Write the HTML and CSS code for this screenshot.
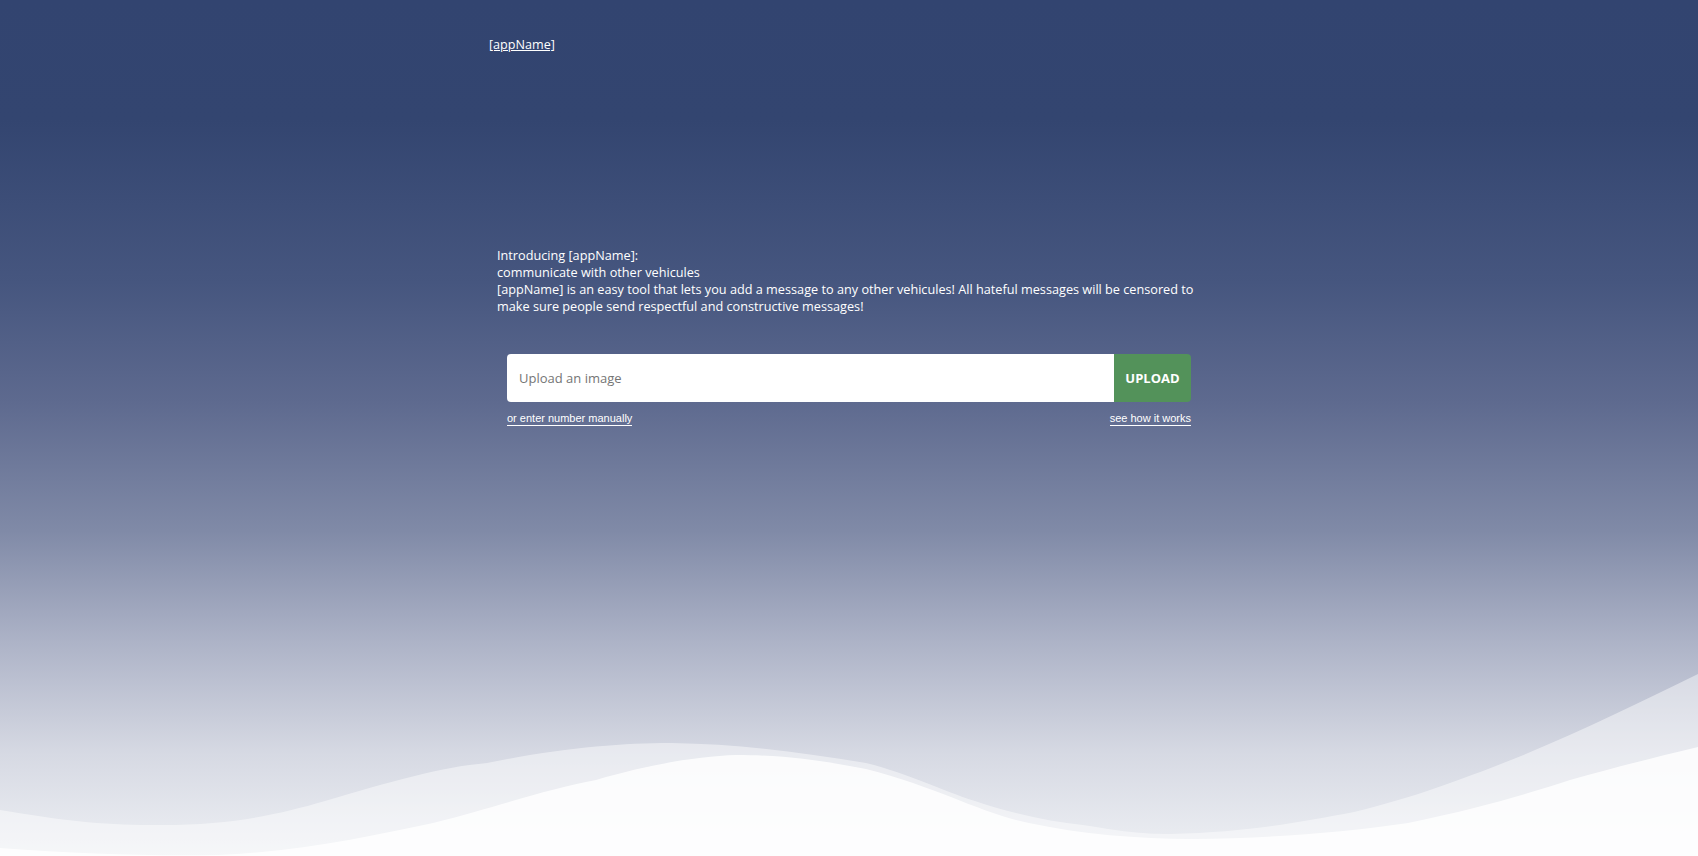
FILE: index.html
```html
<!DOCTYPE html>
<html lang="en">
<head>
<meta charset="utf-8">
<title>[appName]</title>
<link rel="stylesheet" href="styles.css">
</head>
<body>
<div class="page">
  <div class="container">
    <header class="header">
      <a class="brand" href="#">[appName]</a>
    </header>
    <section class="intro">
      <p class="intro-line">Introducing [appName]:</p>
      <p class="intro-line">communicate with other vehicules</p>
      <p class="intro-line">[appName] is an easy tool that lets you add a message to any other vehicules! All hateful messages will be censored to make sure people send respectful and constructive messages!</p>
    </section>
    <form class="upload">
      <div class="upload-row">
        <input class="upload-input" type="text" placeholder="Upload an image">
        <button class="upload-btn" type="button">UPLOAD</button>
      </div>
      <div class="upload-links">
        <a class="small-link" href="#">or enter number manually</a>
        <a class="small-link" href="#">see how it works</a>
      </div>
    </form>
  </div>
  <svg class="waves" viewBox="0 0 1698 200" preserveAspectRatio="none" aria-hidden="true">
    <path fill="rgba(255,255,255,0.45)" d="M0 154 C60 164 100 169 152 169 C230 170 280 158 325 145 C390 126 440 111 487 107 C560 92 620 87 671 87 C740 88 800 96 866 107 C910 118 940 134 975 145 C1010 157 1050 166 1083 169 C1120 175 1140 178 1170 178 C1250 176 1300 166 1354 156 C1420 140 1470 120 1516 102 C1580 76 1640 46 1698 18 L1698 200 L0 200 Z"/>
    <path fill="rgba(255,255,255,0.8)" d="M0 192 C80 198 150 200 217 199 C300 196 370 180 433 167 C500 150 550 132 596 124 C650 108 700 100 736 99 C790 99 830 106 866 113 C940 132 980 157 1029 167 C1080 178 1140 183 1191 183 C1270 182 1340 177 1408 167 C1480 152 1530 137 1570 124 C1620 110 1660 100 1698 91 L1698 200 L0 200 Z"/>
  </svg>
</div>
</body>
</html>
```

FILE: styles.css
```css
html, body {
  margin: 0;
  padding: 0;
}

body {
  font-family: "Open Sans", "Noto Sans", Arial, sans-serif;
  color: #ffffff;
}

.page {
  position: relative;
  min-height: 856px;
  overflow: hidden;
  background: linear-gradient(180deg,
    #324470 0%,
    #334570 14%,
    #46567f 33%,
    #5e6a8f 47%,
    #808aa7 62%,
    #adb3c7 75%,
    #d6d9e3 88%,
    #eef0f4 100%);
}

.container {
  position: relative;
  z-index: 1;
  width: 720px;
  margin: 0 auto;
}

.header {
  padding-top: 32px;
  height: 23px;
}

.brand {
  color: #ffffff;
  font-size: 12.6px;
  line-height: 20px;
  text-decoration: underline;
}

.intro {
  margin-top: 192px;
  padding: 0 8px;
  font-size: 12.7px;
  line-height: 17px;
}

.intro-line {
  margin: 0;
}

.upload {
  margin: 39px 18px 0;
}

.upload-row {
  display: flex;
  height: 48px;
}

.upload-input {
  flex: 1;
  min-width: 0;
  border: none;
  outline: none;
  margin: 0;
  padding: 0 12px;
  height: 48px;
  box-sizing: border-box;
  border-radius: 4px 0 0 4px;
  background: #ffffff;
  font-family: "Open Sans", "Noto Sans", Arial, sans-serif;
  font-size: 13px;
  color: #333;
}

.upload-input::placeholder {
  color: #757575;
}

.upload-btn {
  width: 77px;
  height: 48px;
  margin: 0;
  border: none;
  border-radius: 0 4px 4px 0;
  background: #53925a;
  color: #ffffff;
  font-family: "Open Sans", "Noto Sans", Arial, sans-serif;
  font-weight: 700;
  font-size: 13px;
  cursor: pointer;
}

.upload-links {
  display: flex;
  justify-content: space-between;
  margin-top: 10px;
}

.small-link {
  font-family: "Liberation Sans", Arial, sans-serif;
  font-size: 11px;
  line-height: 12px;
  padding-bottom: 1px;
  color: #ffffff;
  text-decoration: none;
  border-bottom: 1px solid #ffffff;
}

.waves {
  position: absolute;
  left: 0;
  bottom: 0;
  width: 100%;
  height: 200px;
  display: block;
}
```
